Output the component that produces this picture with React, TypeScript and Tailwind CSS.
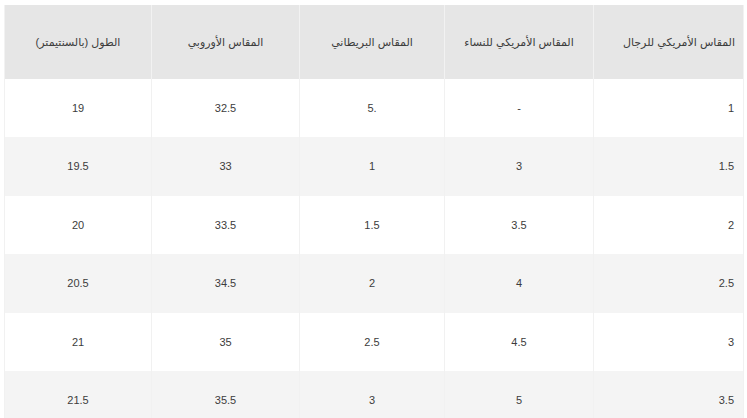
import React from "react";

const headers = [
  "المقاس الأمريكي للرجال",
  "المقاس الأمريكي للنساء",
  "المقاس البريطاني",
  "المقاس الأوروبي",
  "الطول (بالسنتيمتر)",
];

const rows = [
  ["1", "-", "5.", "32.5", "19"],
  ["1.5", "3", "1", "33", "19.5"],
  ["2", "3.5", "1.5", "33.5", "20"],
  ["2.5", "4", "2", "34.5", "20.5"],
  ["3", "4.5", "2.5", "35", "21"],
  ["3.5", "5", "3", "35.5", "21.5"],
];

const widths = ["w-[150px]", "w-[149px]", "w-[145px]", "w-[148px]", "w-[147px]"];

export default function App() {
  return (
    <div
      className="bg-white pt-[5px] px-[4px] h-[418px] overflow-hidden"
      style={{ fontFamily: '"Liberation Sans", "DejaVu Sans", Arial, sans-serif' }}
    >
      <table dir="rtl" className="w-[739px] border-collapse table-fixed text-[11px] text-[#3c3c3c]">
        <thead>
          <tr className="bg-[#e6e6e6] h-[74px]">
            {headers.map((h, i) => (
              <th
                key={i}
                className={`${widths[i]} font-normal border-x border-[#f2f2f2] ${
                  i === 0 ? "text-right pr-[8px]" : "text-center"
                }`}
              >
                {h}
              </th>
            ))}
          </tr>
        </thead>
        <tbody>
          {rows.map((r, ri) => (
            <tr key={ri} className={`h-[58.4px] ${ri % 2 === 0 ? "bg-white" : "bg-[#f4f4f4]"}`}>
              {r.map((c, ci) => (
                <td
                  key={ci}
                  dir="ltr"
                  className={`border-x border-[#f1f1f1] ${
                    ci === 0 ? "text-right pr-[9px]" : "text-center"
                  }`}
                >
                  {c}
                </td>
              ))}
            </tr>
          ))}
        </tbody>
      </table>
    </div>
  );
}
